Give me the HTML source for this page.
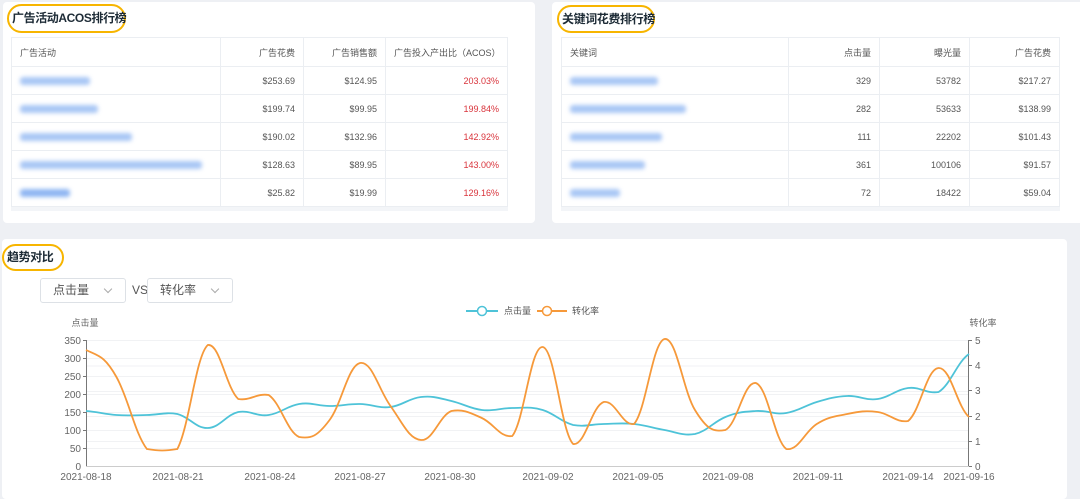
<!DOCTYPE html>
<html><head><meta charset="utf-8"><style>
*{box-sizing:border-box;margin:0;padding:0}
body{width:1080px;height:490px;background:#eef0f4;font-family:"Liberation Sans","Noto Sans CJK SC",sans-serif;position:relative;overflow:hidden;color:#333}
.card{position:absolute;background:#fff;border-radius:4px}
.title{position:absolute;border:2px solid #f7b500;border-radius:16px;font-weight:bold;font-size:12px;letter-spacing:-0.4px;color:#1d2b36;padding:0 3px;line-height:24px;white-space:nowrap}
table{position:absolute;border-collapse:collapse;font-size:9px;color:#555}
td{border:1px solid #ebeef2;height:28px;text-align:right;padding:0 8px}
tr:first-child td{height:29px}
td:first-child{text-align:left}
.red{color:#d9343c}
.bl{display:inline-block;height:8px;background:#a9c7f5;filter:blur(2px);border-radius:3px;vertical-align:middle}
.sel{position:absolute;border:1px solid #dde1e6;border-radius:3px;height:25px;font-size:12px;color:#555;line-height:23px;padding-left:12px}
.sel:after{content:"";position:absolute;right:14px;top:7px;width:5px;height:5px;border-right:1px solid #aaa;border-bottom:1px solid #aaa;transform:rotate(45deg)}
</style></head><body>
<div class="card" style="left:3px;top:2px;width:532px;height:221px"></div>
<div class="card" style="left:552px;top:2px;width:540px;height:221px"></div>
<div class="card" style="left:2px;top:239px;width:1065px;height:260px"></div>

<div class="title" style="left:7px;top:4px;height:29px;line-height:25px;width:119px">广告活动ACOS排行榜</div>
<table style="left:11px;top:37px;width:497px">
<tr><td style="width:209px">广告活动</td><td style="width:83px">广告花费</td><td style="width:82px">广告销售额</td><td>广告投入产出比（ACOS）</td></tr>
<tr><td><span class="bl" style="width:70px"></span></td><td>$253.69</td><td>$124.95</td><td class="red">203.03%</td></tr>
<tr><td><span class="bl" style="width:78px"></span></td><td>$199.74</td><td>$99.95</td><td class="red">199.84%</td></tr>
<tr><td><span class="bl" style="width:112px"></span></td><td>$190.02</td><td>$132.96</td><td class="red">142.92%</td></tr>
<tr><td><span class="bl" style="width:182px"></span></td><td>$128.63</td><td>$89.95</td><td class="red">143.00%</td></tr>
<tr><td><span class="bl" style="width:50px;background:#8fb6f2"></span></td><td>$25.82</td><td>$19.99</td><td class="red">129.16%</td></tr>
</table>
<div style="position:absolute;left:11px;top:207px;width:497px;height:4px;background:#f3f5f8"></div>

<div class="title" style="left:557px;top:5px;height:28px;line-height:24px;width:98px">关键词花费排行榜</div>
<table style="left:561px;top:37px;width:499px">
<tr><td style="width:227px">关键词</td><td style="width:91px">点击量</td><td style="width:90px">曝光量</td><td>广告花费</td></tr>
<tr><td><span class="bl" style="width:88px"></span></td><td>329</td><td>53782</td><td>$217.27</td></tr>
<tr><td><span class="bl" style="width:116px"></span></td><td>282</td><td>53633</td><td>$138.99</td></tr>
<tr><td><span class="bl" style="width:92px"></span></td><td>111</td><td>22202</td><td>$101.43</td></tr>
<tr><td><span class="bl" style="width:75px"></span></td><td>361</td><td>100106</td><td>$91.57</td></tr>
<tr><td><span class="bl" style="width:50px"></span></td><td>72</td><td>18422</td><td>$59.04</td></tr>
</table>
<div style="position:absolute;left:561px;top:207px;width:499px;height:4px;background:#f3f5f8"></div>

<div class="title" style="left:2px;top:244px;height:27px;line-height:23px;width:62px">趋势对比</div>
<div class="sel" style="left:40px;top:278px;width:86px">点击量</div>
<div style="position:absolute;left:132px;top:283px;font-size:12px;color:#555">VS</div>
<div class="sel" style="left:147px;top:278px;width:86px">转化率</div>

<svg style="position:absolute;left:0;top:0" width="1080" height="490" font-family="Liberation Sans,Noto Sans CJK SC,sans-serif">
<g stroke="#f1f2f4" stroke-width="1">
<line x1="86" x2="969" y1="340.5" y2="340.5"/><line x1="86" x2="969" y1="358.5" y2="358.5"/><line x1="86" x2="969" y1="366" y2="366"/><line x1="86" x2="969" y1="376.5" y2="376.5"/><line x1="86" x2="969" y1="391.5" y2="391.5"/><line x1="86" x2="969" y1="394.5" y2="394.5"/><line x1="86" x2="969" y1="412.5" y2="412.5"/><line x1="86" x2="969" y1="416.5" y2="416.5"/><line x1="86" x2="969" y1="430.5" y2="430.5"/><line x1="86" x2="969" y1="441.5" y2="441.5"/><line x1="86" x2="969" y1="448.5" y2="448.5"/>
</g>
<line x1="86" x2="969" y1="466.5" y2="466.5" stroke="#ccc"/>
<line x1="86.5" x2="86.5" y1="340" y2="466" stroke="#777"/>
<line x1="968.5" x2="968.5" y1="340" y2="466" stroke="#777"/>
<g font-size="10" fill="#666" text-anchor="end">
<text x="81" y="344">350</text><text x="81" y="362">300</text><text x="81" y="380">250</text><text x="81" y="398">200</text><text x="81" y="416">150</text><text x="81" y="434">100</text><text x="81" y="452">50</text><text x="81" y="470">0</text>
</g>
<g stroke="#777"><line x1="83" x2="86" y1="340.5" y2="340.5"/><line x1="83" x2="86" y1="358.5" y2="358.5"/><line x1="83" x2="86" y1="376.5" y2="376.5"/><line x1="83" x2="86" y1="394.5" y2="394.5"/><line x1="83" x2="86" y1="412.5" y2="412.5"/><line x1="83" x2="86" y1="430.5" y2="430.5"/><line x1="83" x2="86" y1="448.5" y2="448.5"/>
<line x1="969" x2="972" y1="340.5" y2="340.5"/><line x1="969" x2="972" y1="365.5" y2="365.5"/><line x1="969" x2="972" y1="390.5" y2="390.5"/><line x1="969" x2="972" y1="416.5" y2="416.5"/><line x1="969" x2="972" y1="441.5" y2="441.5"/><line x1="969" x2="972" y1="466.5" y2="466.5"/></g>
<g font-size="10" fill="#666">
<text x="975" y="344">5</text><text x="975" y="369">4</text><text x="975" y="394">3</text><text x="975" y="420">2</text><text x="975" y="445">1</text><text x="975" y="470">0</text>
</g>
<g font-size="10" fill="#666" text-anchor="middle">
<text x="86" y="480">2021-08-18</text><text x="178" y="480">2021-08-21</text><text x="270" y="480">2021-08-24</text><text x="360" y="480">2021-08-27</text><text x="450" y="480">2021-08-30</text><text x="548" y="480">2021-09-02</text><text x="638" y="480">2021-09-05</text><text x="728" y="480">2021-09-08</text><text x="818" y="480">2021-09-11</text><text x="908" y="480">2021-09-14</text><text x="969" y="480">2021-09-16</text>
</g>
<text x="85" y="326" font-size="9" fill="#666" text-anchor="middle">点击量</text>
<text x="983" y="326" font-size="9" fill="#666" text-anchor="middle">转化率</text>
<line x1="466" x2="498" y1="311" y2="311" stroke="#4ec3d8" stroke-width="2"/><circle cx="482" cy="311" r="4.5" fill="#fff" stroke="#4ec3d8" stroke-width="1.5"/>
<text x="504" y="314" font-size="9" fill="#555">点击量</text>
<line x1="537" x2="567" y1="311" y2="311" stroke="#f6993a" stroke-width="2"/><circle cx="547" cy="311" r="4.5" fill="#fff" stroke="#f6993a" stroke-width="1.5"/>
<text x="572" y="314" font-size="9" fill="#555">转化率</text>
<path id="pb" fill="none" stroke="#4ec3d8" stroke-width="1.8"/>
<path id="po" fill="none" stroke="#f6993a" stroke-width="1.8"/>
</svg>
<script>
var b=[411,415,415,414,428,412,415,404,406,404,407,397,401,410,408,410,425,424,424,430,434,417,411,413,402,396,399,388,392,354];
var o=[350,377,449,449,345,399,395,437,420,363,406,440,411,418,436,347,444,402,424,339,410,430,383,449,424,414,412,421,368,417];
function cl(v,a,c){var lo=Math.min(a,c),hi=Math.max(a,c);return Math.max(lo-2,Math.min(hi+2,v));}
function path(a){var n=a.length,s=(969-86)/(n-1),p=a.map(function(y,i){return [86+i*s,y]});var d="M"+p[0][0]+","+p[0][1];
for(var i=0;i<n-1;i++){var p0=p[Math.max(i-1,0)],p1=p[i],p2=p[i+1],p3=p[Math.min(i+2,n-1)],t=0.22;
var c1y=cl(p1[1]+(p2[1]-p0[1])*t,p1[1],p2[1]),c2y=cl(p2[1]-(p3[1]-p1[1])*t,p1[1],p2[1]);
d+=" C"+(p1[0]+s*0.4)+","+c1y+" "+(p2[0]-s*0.4)+","+c2y+" "+p2[0]+","+p2[1];}return d;}
document.getElementById("pb").setAttribute("d",path(b));
document.getElementById("po").setAttribute("d",path(o));
</script>
</body></html>
